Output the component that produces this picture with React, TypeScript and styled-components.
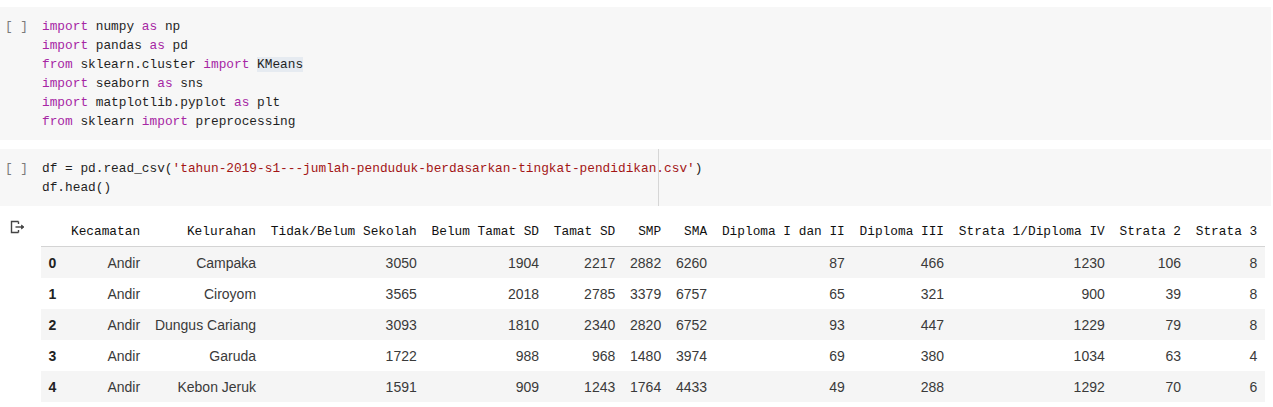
import styled, { createGlobalStyle } from "styled-components"

const GlobalStyle = createGlobalStyle`
  html, body {
    margin: 0;
    padding: 0;
    background: #ffffff;
  }
`

const Notebook = styled.main`
  padding-top: 7px;
  width: 1273px;
  height: 407px;
  overflow: hidden;
`

const CodeCell = styled.section`
  position: relative;
  display: flex;
  background: #f7f7f7;
  margin: 0 2px 9px 0;
  padding: 10px 0 9px;
`

const Gutter = styled.div`
  width: 42px;
  flex: none;
  box-sizing: border-box;
  padding-left: 5px;
  font-family: "Liberation Mono", monospace;
  font-size: 12.8px;
  line-height: 19px;
  color: #7a7a7a;
  white-space: pre;
`

const Code = styled.pre`
  margin: 0;
  font-family: "Liberation Mono", "DejaVu Sans Mono", monospace;
  font-size: 12.8px;
  line-height: 19px;
  color: #1f1f1f;
`

const Ruler = styled.div`
  position: absolute;
  left: 658px;
  top: 0;
  bottom: 0;
  width: 1px;
  background: #d6d6d6;
`

const Kw = styled.span`
  color: #a626a4;
`

const Str = styled.span`
  color: #a31515;
`

const Mark = styled.span`
  background: #e6ebf1;
`

const Output = styled.section`
  display: flex;
  padding-top: 1px;
`

const OutputGutter = styled.div`
  width: 41px;
  flex: none;
  padding: 4px 0 0 10px;
  box-sizing: border-box;
`

const Table = styled.table`
  border-collapse: collapse;
  border-spacing: 0;
  font-family: "Liberation Sans", Arial, sans-serif;
  font-size: 14px;
  color: #3a3a3a;
`

const Th = styled.th`
  height: 30px;
  padding: 0 7.4px;
  text-align: right;
  font-family: "Liberation Mono", monospace;
  font-size: 12.8px;
  font-weight: normal;
  color: #111111;
  white-space: nowrap;
  border-bottom: 1px solid #d4d4d4;
`

const Row = styled.tr<{ $striped: boolean }>`
  background: ${(p) => (p.$striped ? "#f5f5f5" : "#ffffff")};
`

const IndexCell = styled.th`
  height: 31px;
  padding: 0 7.4px;
  text-align: left;
  font-weight: bold;
  color: #222222;
`

const Td = styled.td`
  height: 31px;
  padding: 0 7.4px;
  text-align: right;
  white-space: nowrap;
`

const columns = [
  "Kecamatan",
  "Kelurahan",
  "Tidak/Belum Sekolah",
  "Belum Tamat SD",
  "Tamat SD",
  "SMP",
  "SMA",
  "Diploma I dan II",
  "Diploma III",
  "Strata 1/Diploma IV",
  "Strata 2",
  "Strata 3",
]

const rows: (string | number)[][] = [
  ["Andir", "Campaka", 3050, 1904, 2217, 2882, 6260, 87, 466, 1230, 106, 8],
  ["Andir", "Ciroyom", 3565, 2018, 2785, 3379, 6757, 65, 321, 900, 39, 8],
  ["Andir", "Dungus Cariang", 3093, 1810, 2340, 2820, 6752, 93, 447, 1229, 79, 8],
  ["Andir", "Garuda", 1722, 988, 968, 1480, 3974, 69, 380, 1034, 63, 4],
  ["Andir", "Kebon Jeruk", 1591, 909, 1243, 1764, 4433, 49, 288, 1292, 70, 6],
]

function OutputIcon() {
  return (
    <svg width="16" height="14" viewBox="0 0 16 14" fill="none" stroke="#444" strokeWidth="1.4">
      <path d="M8.5 1.5H1.5V12.5H8.5" />
      <path d="M8.5 1.5V4M8.5 12.5V10" />
      <path d="M5.5 7H13" />
      <path d="M11.5 5L14 7L11.5 9Z" fill="#444" strokeWidth="0.8" />
    </svg>
  )
}

export default function App() {
  return (
    <>
      <GlobalStyle />
      <Notebook>
        <CodeCell>
          <Gutter>{"[ ]"}</Gutter>
          <Code>
            <Kw>import</Kw> numpy <Kw>as</Kw> np{"\n"}
            <Kw>import</Kw> pandas <Kw>as</Kw> pd{"\n"}
            <Kw>from</Kw> sklearn.cluster <Kw>import</Kw> <Mark>KMeans</Mark>{"\n"}
            <Kw>import</Kw> seaborn <Kw>as</Kw> sns{"\n"}
            <Kw>import</Kw> matplotlib.pyplot <Kw>as</Kw> plt{"\n"}
            <Kw>from</Kw> sklearn <Kw>import</Kw> preprocessing
          </Code>
        </CodeCell>

        <CodeCell>
          <Gutter>{"[ ]"}</Gutter>
          <Code>
            df = pd.read_csv(<Str>'tahun-2019-s1---jumlah-penduduk-berdasarkan-tingkat-pendidikan.csv'</Str>){"\n"}
            df.head()
          </Code>
          <Ruler />
        </CodeCell>

        <Output>
          <OutputGutter>
            <OutputIcon />
          </OutputGutter>
          <Table>
            <thead>
              <tr>
                <Th />
                {columns.map((c) => (
                  <Th key={c}>{c}</Th>
                ))}
              </tr>
            </thead>
            <tbody>
              {rows.map((r, i) => (
                <Row key={i} $striped={i % 2 === 0}>
                  <IndexCell>{i}</IndexCell>
                  {r.map((v, j) => (
                    <Td key={j}>{v}</Td>
                  ))}
                </Row>
              ))}
            </tbody>
          </Table>
        </Output>
      </Notebook>
    </>
  )
}
